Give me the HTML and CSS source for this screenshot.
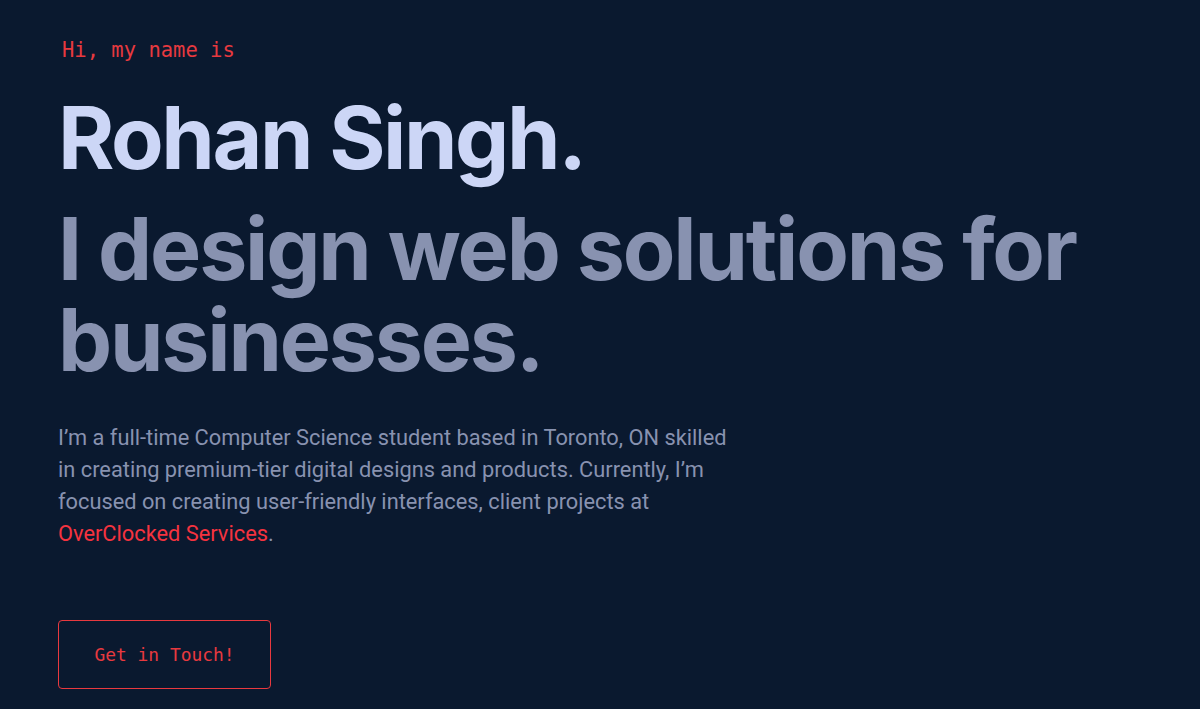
FILE: index.html
```html
<!DOCTYPE html>
<html lang="en">
<head>
<meta charset="utf-8">
<title>Rohan Singh</title>
<link rel="stylesheet" href="styles.css">
</head>
<body>
<main class="hero">
  <p class="hello">Hi, my name is</p>
  <h1 class="name">Rohan Singh.</h1>
  <h2 class="tagline">I design web solutions for businesses.</h2>
  <p class="about">I’m a full-time Computer Science student based in Toronto, ON skilled in creating premium-tier digital designs and products. Currently, I’m focused on creating user-friendly interfaces, client projects at <a class="accent" href="#">OverClocked Services</a>.</p>
  <a class="cta" href="#">Get in Touch!</a>
</main>
</body>
</html>
```

FILE: styles.css
```css
html, body {
  margin: 0;
  padding: 0;
  background: #0a192f;
  height: 100%;
}
body {
  font-family: "Inter", "Liberation Sans", sans-serif;
}
.hero {
  display: flex;
  flex-direction: column;
  align-items: flex-start;
  padding: 36px 58px 0 58px;
}
.hello {
  margin: 0 0 0 4px;
  font-family: "DejaVu Sans Mono", monospace;
  font-size: 20.5px;
  line-height: 28px;
  color: #e8393f;
}
.name {
  margin: 29px 0 0 0;
  font-size: 86px;
  font-weight: 700;
  line-height: 90px;
  letter-spacing: -2.4px;
  color: #ccd6f6;
}
.tagline {
  margin: 21px 0 0 0;
  font-size: 86px;
  font-weight: 700;
  line-height: 91px;
  letter-spacing: -2.2px;
  color: #8892b0;
  max-width: 1100px;
}
.about {
  margin: 36px 0 0 0;
  max-width: 682px;
  font-family: "Roboto", "Liberation Sans", sans-serif;
  font-size: 21.8px;
  line-height: 32px;
  color: #8892b0;
}
.accent {
  color: #f5333f;
  text-decoration: none;
}
.cta {
  margin-top: 70px;
  box-sizing: border-box;
  width: 213px;
  height: 69px;
  display: flex;
  align-items: center;
  justify-content: center;
  border: 1px solid #e8393f;
  border-radius: 4px;
  font-family: "DejaVu Sans Mono", monospace;
  font-size: 17.9px;
  color: #e8393f;
  text-decoration: none;
}
```
